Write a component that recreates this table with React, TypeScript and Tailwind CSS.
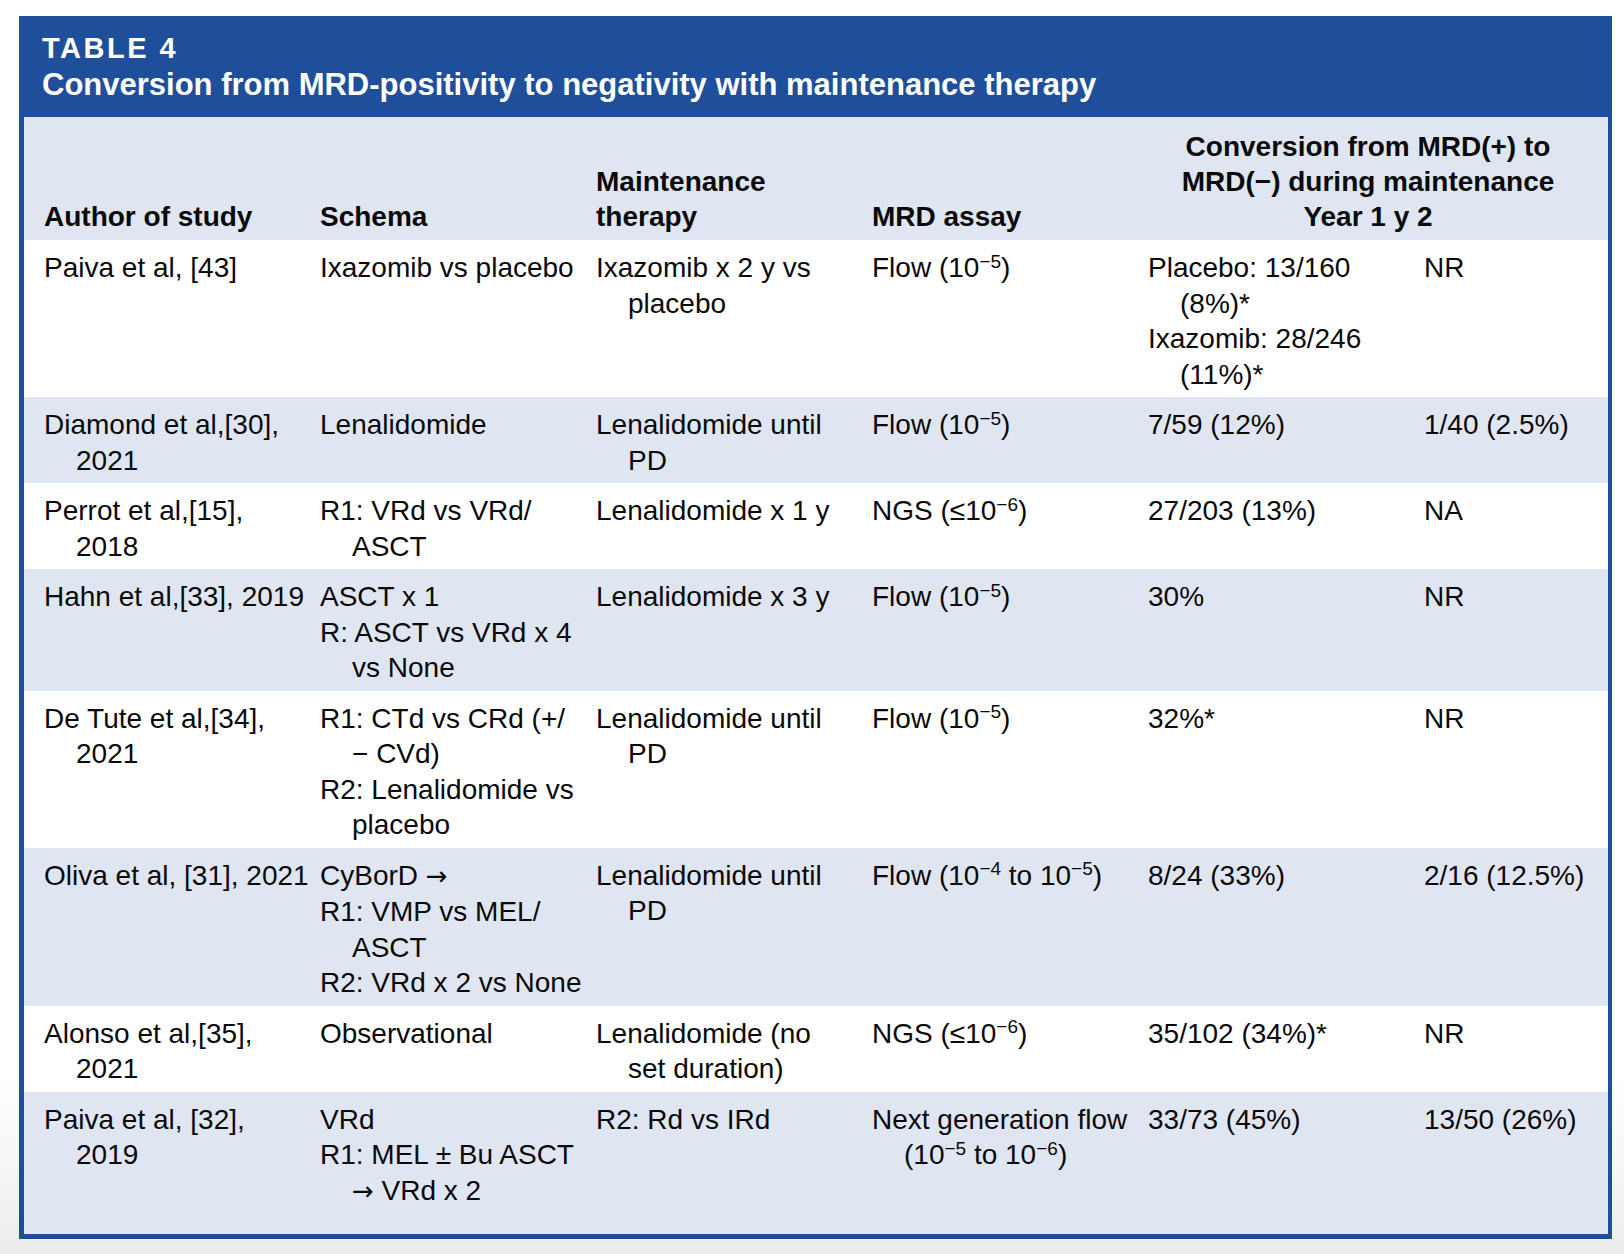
import React from "react";

const S = ({ children }: { children: React.ReactNode }) => (
  <sup className="relative -top-[0.5em] align-baseline text-[19px]">{children}</sup>
);

const Arrow = () => (
  <span style={{ fontFamily: '"DejaVu Sans", sans-serif' }} className="text-[26px]">
    →
  </span>
);

type Line = { t: React.ReactNode; i?: boolean };
const L = (t: React.ReactNode, i = false): Line => ({ t, i });

const flow5 = (
  <>
    Flow (10<S>−5</S>)
  </>
);
const ngs6 = (
  <>
    NGS (≤10<S>−6</S>)
  </>
);

const rows: Line[][][] = [
  [
    [L("Paiva et al, [43]")],
    [L("Ixazomib vs placebo")],
    [L("Ixazomib x 2 y vs"), L("placebo", true)],
    [L(flow5)],
    [L("Placebo: 13/160"), L("(8%)*", true), L("Ixazomib: 28/246"), L("(11%)*", true)],
    [L("NR")],
  ],
  [
    [L("Diamond et al,[30],"), L("2021", true)],
    [L("Lenalidomide")],
    [L("Lenalidomide until"), L("PD", true)],
    [L(flow5)],
    [L("7/59 (12%)")],
    [L("1/40 (2.5%)")],
  ],
  [
    [L("Perrot et al,[15],"), L("2018", true)],
    [L("R1: VRd vs VRd/"), L("ASCT", true)],
    [L("Lenalidomide x 1 y")],
    [L(ngs6)],
    [L("27/203 (13%)")],
    [L("NA")],
  ],
  [
    [L("Hahn et al,[33], 2019")],
    [L("ASCT x 1"), L("R: ASCT vs VRd x 4"), L("vs None", true)],
    [L("Lenalidomide x 3 y")],
    [L(flow5)],
    [L("30%")],
    [L("NR")],
  ],
  [
    [L("De Tute et al,[34],"), L("2021", true)],
    [L("R1: CTd vs CRd (+/"), L("− CVd)", true), L("R2: Lenalidomide vs"), L("placebo", true)],
    [L("Lenalidomide until"), L("PD", true)],
    [L(flow5)],
    [L("32%*")],
    [L("NR")],
  ],
  [
    [L("Oliva et al, [31], 2021")],
    [
      L(
        <>
          CyBorD <Arrow />
        </>
      ),
      L("R1: VMP vs MEL/"),
      L("ASCT", true),
      L("R2: VRd x 2 vs None"),
    ],
    [L("Lenalidomide until"), L("PD", true)],
    [
      L(
        <>
          Flow (10<S>−4</S> to 10<S>−5</S>)
        </>
      ),
    ],
    [L("8/24 (33%)")],
    [L("2/16 (12.5%)")],
  ],
  [
    [L("Alonso et al,[35],"), L("2021", true)],
    [L("Observational")],
    [L("Lenalidomide (no"), L("set duration)", true)],
    [L(ngs6)],
    [L("35/102 (34%)*")],
    [L("NR")],
  ],
  [
    [L("Paiva et al, [32],"), L("2019", true)],
    [
      L("VRd"),
      L("R1: MEL ± Bu ASCT"),
      L(
        <>
          <Arrow /> VRd x 2
        </>,
        true
      ),
    ],
    [L("R2: Rd vs IRd")],
    [
      L("Next generation flow"),
      L(
        <>
          (10<S>−5</S> to 10<S>−6</S>)
        </>,
        true
      ),
    ],
    [L("33/73 (45%)")],
    [L("13/50 (26%)")],
  ],
];

export default function App() {
  return (
    <div
      className="h-[1254px] w-full overflow-hidden bg-[linear-gradient(to_bottom,#ffffff_0%,#ffffff_86%,#ececec_100%)] pt-[16px]"
      style={{ fontFamily: '"Liberation Sans", Arial, sans-serif' }}
    >
      <div className="ml-[19px] w-[1593px] bg-[#1f4f9b]">
        {/* Title */}
        <div className="pl-[23px] pt-[15px] pb-[13px] text-white">
          <div className="text-[29px] font-bold leading-[34px] tracking-[2.5px]">TABLE 4</div>
          <div className="mt-[1px] text-[31px] font-bold leading-[38px]">
            Conversion from MRD-positivity to negativity with maintenance therapy
          </div>
        </div>
        {/* Body */}
        <div className="ml-[5px] mr-[4px] pb-[5px]">
          <div className="bg-[#dfe6f1] text-[#0a0a0a]">
            {/* Header row */}
            <div className="flex items-end pl-[10px] pt-[12px] pb-[6px] text-[28px] font-bold leading-[35px]">
              <div className="w-[276px] shrink-0 pl-[10px]">Author of study</div>
              <div className="w-[276px] shrink-0 pl-[10px]">Schema</div>
              <div className="w-[276px] shrink-0 pl-[10px]">
                <div>Maintenance</div>
                <div>therapy</div>
              </div>
              <div className="w-[276px] shrink-0 pl-[10px]">MRD assay</div>
              <div className="flex-1 pl-[10px] pr-[20px] text-center">
                <div>Conversion from MRD(+) to</div>
                <div>MRD(−) during maintenance</div>
                <div>Year 1 y 2</div>
              </div>
            </div>
            {/* Data rows */}
            {rows.map((row, ri) => (
              <div
                key={ri}
                className={`flex pl-[10px] pt-[10px] text-[28px] leading-[35.5px] ${
                  ri % 2 === 1 ? "bg-[#dfe6f1]" : "bg-white"
                } ${ri === rows.length - 1 ? "pb-[25px]" : "pb-[5px]"}`}
              >
                {row.map((cell, ci) => (
                  <div
                    key={ci}
                    className={ci < 5 ? "w-[276px] shrink-0 pl-[10px]" : "flex-1 pl-[10px]"}
                  >
                    {cell.map((ln, li) => (
                      <div key={li} className={`whitespace-nowrap ${ln.i ? "pl-[32px]" : ""}`}>
                        {ln.t}
                      </div>
                    ))}
                  </div>
                ))}
              </div>
            ))}
          </div>
        </div>
      </div>
    </div>
  );
}
